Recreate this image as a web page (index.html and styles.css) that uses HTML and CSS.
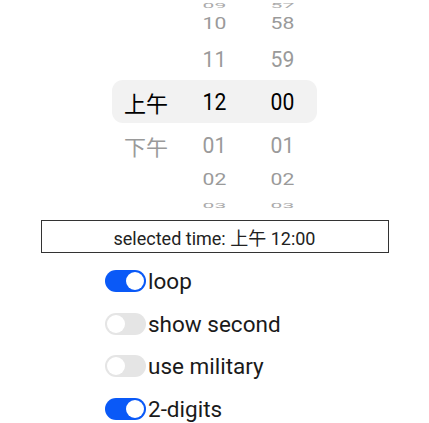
FILE: index.html
```html
<!DOCTYPE html>
<html lang="zh">
<head>
  <meta charset="UTF-8">
  <title>Time Picker</title>
  <link rel="stylesheet" href="styles.css">
</head>
<body>
  <div class="picker">
    <div class="row far">
      <span class="cell"></span>
      <span class="cell"><span class="txt">09</span></span>
      <span class="cell"><span class="txt">57</span></span>
    </div>
    <div class="row mid">
      <span class="cell"></span>
      <span class="cell"><span class="txt">10</span></span>
      <span class="cell"><span class="txt">58</span></span>
    </div>
    <div class="row near">
      <span class="cell"></span>
      <span class="cell"><span class="txt">11</span></span>
      <span class="cell"><span class="txt">59</span></span>
    </div>
    <div class="row selected">
      <span class="cell"><span class="txt cjk">上午</span></span>
      <span class="cell"><span class="txt">12</span></span>
      <span class="cell"><span class="txt">00</span></span>
    </div>
    <div class="row near below">
      <span class="cell"><span class="txt cjk">下午</span></span>
      <span class="cell"><span class="txt">01</span></span>
      <span class="cell"><span class="txt">01</span></span>
    </div>
    <div class="row mid">
      <span class="cell"></span>
      <span class="cell"><span class="txt">02</span></span>
      <span class="cell"><span class="txt">02</span></span>
    </div>
    <div class="row far last">
      <span class="cell"></span>
      <span class="cell"><span class="txt">03</span></span>
      <span class="cell"><span class="txt">03</span></span>
    </div>
  </div>

  <div class="result">selected time: 上午 12:00</div>

  <div class="options">
    <label class="option"><span class="switch on"></span>loop</label>
    <label class="option"><span class="switch"></span>show second</label>
    <label class="option"><span class="switch"></span>use military</label>
    <label class="option"><span class="switch on"></span>2-digits</label>
  </div>
</body>
</html>
```

FILE: styles.css
```css
* {
  margin: 0;
  padding: 0;
  box-sizing: border-box;
}
body {
  background: #fff;
  color: #1a1a1a;
  font-family: Roboto, "Noto Sans CJK SC", sans-serif;
  width: 429px;
  height: 423px;
  overflow: hidden;
}

/* wheel picker */
.picker {
  height: 210px;
  overflow: hidden;
  display: flex;
  flex-direction: column;
  align-items: center;
}
.row {
  display: grid;
  grid-template-columns: 68px 68px 69px;
  width: 205px;
  height: 28px;
  color: #9a9a9a;
  font-size: 24px;
  flex-shrink: 0;
}
.cell {
  display: flex;
  align-items: center;
  justify-content: center;
}
.txt {
  display: inline-block;
  line-height: 1;
  transform: scaleX(0.88);
}
.txt.cjk {
  font-family: "Noto Sans CJK SC", sans-serif;
  font-size: 22px;
  transform: none;
}
.row.far {
  height: 16px;
  margin-top: -6px;
  color: #ababab;
}
.row.far .txt {
  transform: scale(0.88, 0.3);
}
.row.mid .txt {
  transform: scale(0.88, 0.68);
}
.row.near {
  height: 42px;
}
.row.near .txt {
  transform: scale(0.88, 0.95);
}
.row.near .txt.cjk {
  transform: scaleY(0.95);
}
.row.below {
  height: 43px;
}
.row.far.last {
  height: 14px;
  margin-top: 0;
}
.row.selected {
  height: 43px;
  color: #000;
  background: #f2f2f2;
  border-radius: 11px;
}

/* result box */
.result {
  width: 348px;
  height: 33px;
  margin: 10px auto 0;
  border: 1px solid #333;
  display: flex;
  align-items: center;
  justify-content: center;
  font-size: 18px;
  color: #222;
}

/* toggles */
.options {
  margin-top: 7px;
  padding-left: 105px;
}
.option {
  display: flex;
  align-items: center;
  height: 42.5px;
  font-size: 22.5px;
  color: #1a1a1a;
}
.switch {
  position: relative;
  width: 41px;
  height: 22px;
  border-radius: 11px;
  background: #e5e5e5;
  margin-right: 2px;
}
.switch::after {
  content: "";
  position: absolute;
  top: 2px;
  left: 2px;
  width: 18px;
  height: 18px;
  border-radius: 50%;
  background: #fff;
}
.switch.on {
  background: #0a59f7;
}
.switch.on::after {
  left: 21px;
}
```
